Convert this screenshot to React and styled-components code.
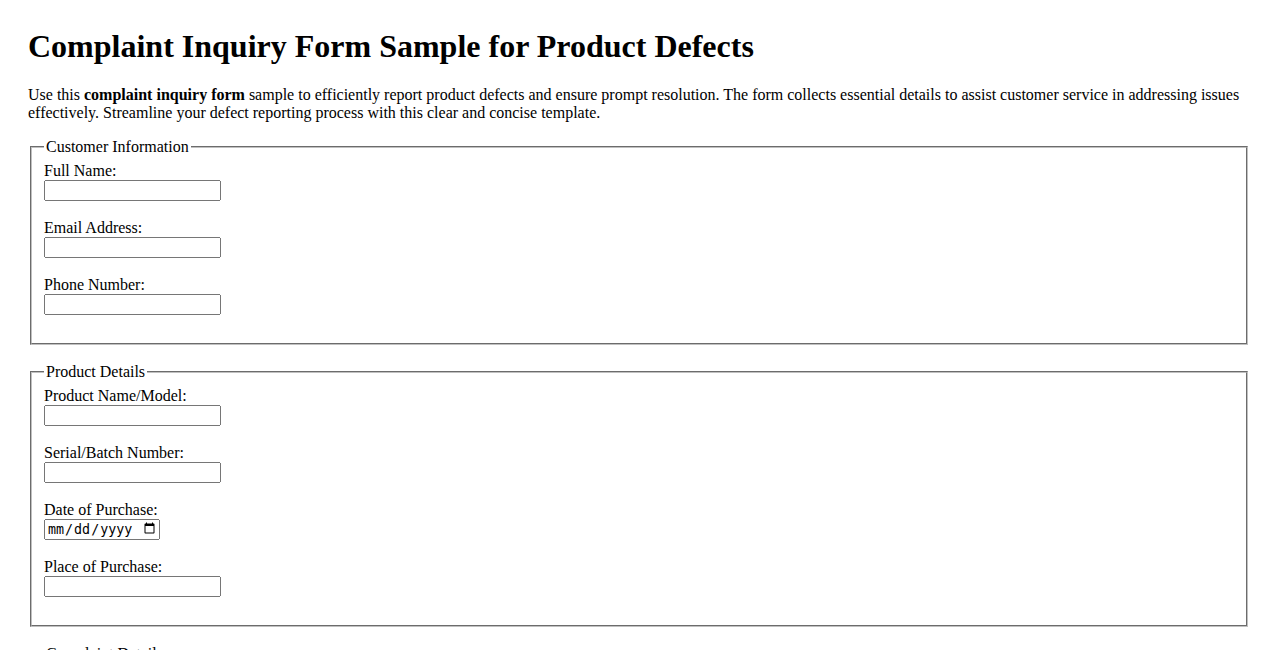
import React from "react";
import styled, { createGlobalStyle } from "styled-components";

const Global = createGlobalStyle`
  html, body { margin: 0; padding: 0; background: #fff; }
  body { font-family: "Liberation Serif", "Times New Roman", serif; font-size: 16px; color: #000; }
`;

const Page = styled.div`
  padding: 28px;
`;

const Title = styled.h1`
  font-size: 32px;
  font-weight: bold;
  margin: 0 0 21.44px;
`;

const Intro = styled.p`
  margin: 0 0 16px;
`;

const Section = styled.fieldset`
  margin: 0 2px 18px;
  padding: 5.6px 12px 10px;
  border: 2px groove rgb(192, 192, 192);
  min-inline-size: min-content;
`;

const Legend = styled.legend`
  padding: 0 2px;
`;

const Field = styled.div`
  display: flex;
  flex-direction: column;
  align-items: flex-start;
  margin-bottom: 18px;
`;

const Label = styled.label`
  display: block;
`;

const Input = styled.input`
  display: block;
  margin: 0;
  box-sizing: border-box;
  height: 21px;
  width: ${(p) => (p.type === "date" ? "116px" : "177px")};
`;

const TextArea = styled.textarea`
  display: block;
  margin: 0;
`;

const groups = [
  {
    legend: "Customer Information",
    fields: [
      { id: "name", label: "Full Name:", type: "text" },
      { id: "email", label: "Email Address:", type: "email" },
      { id: "phone", label: "Phone Number:", type: "tel" },
    ],
  },
  {
    legend: "Product Details",
    fields: [
      { id: "product", label: "Product Name/Model:", type: "text" },
      { id: "serial", label: "Serial/Batch Number:", type: "text" },
      { id: "date", label: "Date of Purchase:", type: "date" },
      { id: "place", label: "Place of Purchase:", type: "text" },
    ],
  },
  {
    legend: "Complaint Details",
    fields: [
      { id: "desc", label: "Description of Defect:", type: "textarea" },
      { id: "first", label: "Date Defect First Noticed:", type: "date" },
    ],
  },
];

export default function App() {
  return (
    <>
      <Global />
      <Page>
        <Title>Complaint Inquiry Form Sample for Product Defects</Title>
        <Intro>
          Use this <b>complaint inquiry form</b> sample to efficiently report product defects and
          ensure prompt resolution. The form collects essential details to assist customer service
          in addressing issues effectively. Streamline your defect reporting process with this
          clear and concise template.
        </Intro>
        <form onSubmit={(e) => e.preventDefault()}>
          {groups.map((g) => (
            <Section key={g.legend}>
              <Legend>{g.legend}</Legend>
              {g.fields.map((f) => (
                <Field key={f.id}>
                  <Label htmlFor={f.id}>{f.label}</Label>
                  {f.type === "textarea" ? (
                    <TextArea id={f.id} rows={4} cols={50} />
                  ) : (
                    <Input id={f.id} type={f.type} />
                  )}
                </Field>
              ))}
            </Section>
          ))}
        </form>
      </Page>
    </>
  );
}
